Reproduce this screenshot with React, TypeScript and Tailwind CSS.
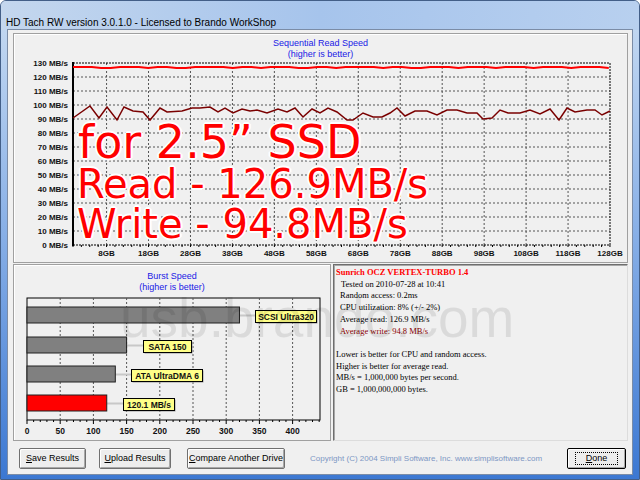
import React from "react"

const SANS = "'Liberation Sans', Arial, sans-serif"

const gbX = (g: number) => 73 + (537 / 128) * g
const mbY = (v: number) => 245 - v * 1.4
const burstX = (v: number) => 27 + v * 0.664

const writePts: [number, number][] = [
  [73, 118], [90, 106], [99, 118], [107, 107], [117, 120], [124, 107], [133, 111], [143, 112],
  [150, 120], [160, 108], [167, 112], [182, 111], [192, 108], [200, 108], [210, 107], [218, 112],
  [225, 108], [233, 113], [242, 109], [250, 111], [257, 110], [267, 113], [278, 109], [287, 112],
  [295, 108], [303, 117], [312, 109], [320, 113], [328, 108], [337, 112], [347, 120], [353, 120],
  [363, 113], [373, 117], [382, 117], [390, 113], [397, 108], [405, 116], [415, 111], [427, 111],
  [437, 115], [447, 110], [457, 110], [467, 113], [477, 113], [483, 119], [492, 118], [500, 110],
  [508, 113], [520, 113], [530, 110], [540, 114], [550, 109], [559, 120], [567, 108], [575, 112],
  [587, 110], [595, 110], [602, 115], [610, 111],
]

const readYs = [67, 67, 67, 68, 68, 67, 67, 67, 68, 67, 67, 68, 68, 67, 67, 67, 67, 68, 67, 67, 68, 67, 67, 67, 68, 68, 67, 67, 68, 67, 67, 67, 67, 68, 67, 67, 68, 68, 67, 67, 67, 68, 67, 67, 67, 68, 67, 67, 67, 68, 67, 67, 67, 68, 67, 67, 67, 68]

const readPts = readYs.map((y, i) => `${Math.min(73 + i * 9.4, 610)},${y}`).join(" ")

const bursts = [
  { v: 320, y: 307, fill: "#808080", label: "SCSI Ultra320", bx: 255, bw: 61 },
  { v: 150, y: 337, fill: "#808080", label: "SATA 150", bx: 143, bw: 48 },
  { v: 133, y: 366, fill: "#808080", label: "ATA UltraDMA 6", bx: 131, bw: 71 },
  { v: 120.1, y: 395, fill: "#ff0000", label: "120.1 MB/s", bx: 123, bw: 51 },
]

function SeqChart() {
  const yVals = Array.from({ length: 14 }, (_, i) => i * 10)
  const xGbs = Array.from({ length: 13 }, (_, i) => 8 + i * 10)
  return (
    <svg width={613} height={202} viewBox="14 60 613 202" style={{ fontFamily: SANS }}>
      {yVals.slice(1, 13).map((v) => (
        <line key={v} x1={73} x2={610} y1={mbY(v)} y2={mbY(v)} stroke="#555" strokeDasharray="2 2" />
      ))}
      {xGbs.slice(0, 12).map((g) => (
        <line key={g} x1={gbX(g)} x2={gbX(g)} y1={63} y2={245} stroke="#555" strokeDasharray="2 2" />
      ))}
      {Array.from({ length: 65 }, (_, i) => (
        <line key={i} x1={73 + i * 8.39} x2={73 + i * 8.39} y1={245} y2={247} stroke="#000" />
      ))}
      <line x1={73} x2={610} y1={63} y2={63} stroke="#000" strokeDasharray="2 1" />
      <line x1={610} x2={610} y1={63} y2={245} stroke="#000" strokeDasharray="2 1" />
      <line x1={73} x2={610} y1={245} y2={245} stroke="#000" strokeDasharray="2 1" />
      <line x1={73} x2={73} y1={62} y2={246} stroke="#000" strokeWidth={2} />
      <polyline points={readPts} fill="none" stroke="#ff0000" strokeWidth={2} />
      <polyline points={writePts.map((p) => p.join(",")).join(" ")} fill="none" stroke="#7a0000" strokeWidth={1.5} />
      {yVals.map((v) => (
        <text key={v} x={68} y={mbY(v) + 3} fontSize={8} fontWeight="bold" textAnchor="end" fill="#111">
          {v} MB/s
        </text>
      ))}
      {xGbs.map((g) => (
        <text key={g} x={gbX(g)} y={256} fontSize={8} fontWeight="bold" textAnchor="middle" fill="#111">
          {g}GB
        </text>
      ))}
    </svg>
  )
}

function BurstChart() {
  const ticks = Array.from({ length: 9 }, (_, i) => i * 50)
  return (
    <svg width={316} height={147} viewBox="14 293 316 147" style={{ fontFamily: SANS }}>
      <rect x={27} y={298} width={293} height={122} fill="none" stroke="#000" />
      {ticks.slice(1).map((t) => (
        <line key={t} x1={burstX(t)} x2={burstX(t)} y1={298} y2={420} stroke="#555" strokeDasharray="2 2" />
      ))}
      {Array.from({ length: 45 }, (_, i) => (
        <line key={i} x1={burstX(i * 10)} x2={burstX(i * 10)} y1={420} y2={i % 5 === 0 ? 424 : 422} stroke="#000" />
      ))}
      {bursts.map((b) => (
        <g key={b.label}>
          <line x1={burstX(b.v)} x2={b.bx} y1={b.y + 8.5} y2={b.y + 8.5} stroke="#c8c8c8" strokeWidth={2} />
          <rect x={27} y={b.y} width={burstX(b.v) - 27} height={16} fill={b.fill} stroke="#202020" />
          <rect x={b.bx + 1.5} y={b.y + 4.5} width={b.bw} height={12} fill="#9a9a9a" />
          <rect x={b.bx + 0.5} y={b.y + 3.5} width={b.bw} height={12} fill="#ffff88" stroke="#000" />
          <text x={b.bx + b.bw / 2 + 0.5} y={b.y + 12.5} fontSize={8.5} fontWeight="bold" textAnchor="middle" fill="#111">
            {b.label}
          </text>
        </g>
      ))}
      {ticks.map((t) => (
        <text key={t} x={burstX(t)} y={434} fontSize={8.5} fontWeight="bold" textAnchor="middle" fill="#111">
          {t}
        </text>
      ))}
    </svg>
  )
}

function Btn({ u, rest, className, isDefault }: { u: string; rest: string; className: string; isDefault?: boolean }) {
  return (
    <div
      className={`h-[21px] flex items-center justify-center rounded-[2px] bg-[#ededed] text-[9px] text-black font-['Liberation_Sans',sans-serif] shadow-[inset_1px_1px_0_#fff,inset_-1px_-1px_0_#a8a8a8] ${
        isDefault ? "border border-black" : "border border-[#707070]"
      } ${className}`}
    >
      <span className={isDefault ? "border border-dotted border-black px-[10px] leading-[11px]" : ""}>
        <span className="underline">{u}</span>
        {rest}
      </span>
    </div>
  )
}

export default function App() {
  return (
    <div className="relative w-[640px] h-[480px] overflow-hidden rounded-t-[6px] border border-[#435f88] bg-gradient-to-b from-[#c9dcf2] via-[#86aee6] to-[#3c78d2]">
      {/* title bar */}
      <div className="h-[29px] pl-[5px] pt-[7px] bg-gradient-to-r from-[#c4d7ee] via-[#a6c4ec] to-[#b8d0ef]">
        <span className="text-[10px] leading-[12px] text-black font-['Liberation_Sans',sans-serif]">
          HD Tach RW version 3.0.1.0 - Licensed to Brando WorkShop
        </span>
      </div>

      {/* client area */}
      <div className="mx-[7px] h-[444px] bg-[#f0f0f0] shadow-[0_0_0_1px_#7b8ca6] flex flex-col">
        {/* sequential read */}
        <div className="relative mt-[3px] ml-[5px] w-[615px] h-[230px] border border-[#a0a0a0] shadow-[inset_1px_1px_0_#fff] flex flex-col">
          <div className="pt-[4px] text-center text-[9px] leading-[11px] text-[#2020e6] font-['Liberation_Sans',sans-serif]">
            <div>Sequential Read Speed</div>
            <div>(higher is better)</div>
          </div>
          <SeqChart />
          <div className="absolute left-[63px] top-[86px] whitespace-nowrap font-['DejaVu_Sans',sans-serif] text-[40px] leading-[40px] text-[#ff0000] [text-shadow:-2px_0_0_#fff,2px_0_0_#fff,0_-2px_0_#fff,0_2px_0_#fff,-1px_-1px_0_#fff,1px_1px_0_#fff,-1px_1px_0_#fff,1px_-1px_0_#fff]">
            <div className="ml-[1px] text-[46px] leading-[44px]">for 2.5” SSD</div>
            <div>Read - 126.9MB/s</div>
            <div>Write - 94.8MB/s</div>
          </div>
        </div>

        {/* bottom panels */}
        <div className="mt-[1px] ml-[5px] h-[177px] flex gap-[2px]">
          <div className="w-[318px] border border-[#a0a0a0] shadow-[inset_1px_1px_0_#fff] flex flex-col">
            <div className="pt-[6px] text-center text-[9px] leading-[11px] text-[#2020e6] font-['Liberation_Sans',sans-serif]">
              <div>Burst Speed</div>
              <div>(higher is better)</div>
            </div>
            <BurstChart />
          </div>
          <div className="w-[295px] border border-t-[#6e6e6e] border-l-[#6e6e6e] border-r-[#dcdcdc] border-b-[#dcdcdc] shadow-[inset_1px_1px_0_#a8a8a8] pt-[2px] pl-[2px] text-[8.5px] leading-[11.7px] text-black font-['Liberation_Serif',serif]">
            <div className="font-bold text-[#ff0000]">Sunrich OCZ VERTEX-TURBO 1.4</div>
            <div className="pl-[5px]">Tested on 2010-07-28 at 10:41</div>
            <div className="pl-[4px]">Random access: 0.2ms</div>
            <div className="pl-[4px]">CPU utilization: 8% (+/- 2%)</div>
            <div className="pl-[4px]">Average read: 126.9 MB/s</div>
            <div className="pl-[4px] text-[#8b0000]">Average write: 94.8 MB/s</div>
            <div>&nbsp;</div>
            <div>Lower is better for CPU and random access.</div>
            <div>Higher is better for average read.</div>
            <div>MB/s = 1,000,000 bytes per second.</div>
            <div>GB = 1,000,000,000 bytes.</div>
          </div>
        </div>

        {/* buttons */}
        <div className="mt-[7px] flex items-center">
          <Btn u="S" rest="ave Results" className="ml-[11px] w-[67px]" />
          <Btn u="U" rest="pload Results" className="ml-[13px] w-[72px]" />
          <Btn u="C" rest="ompare Another Drive" className="ml-[16px] w-[98px]" />
          <div className="ml-[25px] w-[241px] text-[8px] text-[#7d97c4] font-['Liberation_Sans',sans-serif] whitespace-nowrap">
            Copyright (C) 2004 Simpli Software, Inc. www.simplisoftware.com
          </div>
          <Btn u="D" rest="one" className="ml-[16px] w-[59px]" isDefault />
        </div>
      </div>

      {/* watermark */}
      <div className="pointer-events-none absolute left-[119px] top-[290px] whitespace-nowrap text-[55px] leading-[55px] text-black/[0.09] font-['Liberation_Sans',sans-serif]">
        usb.brando.com
      </div>
    </div>
  )
}
